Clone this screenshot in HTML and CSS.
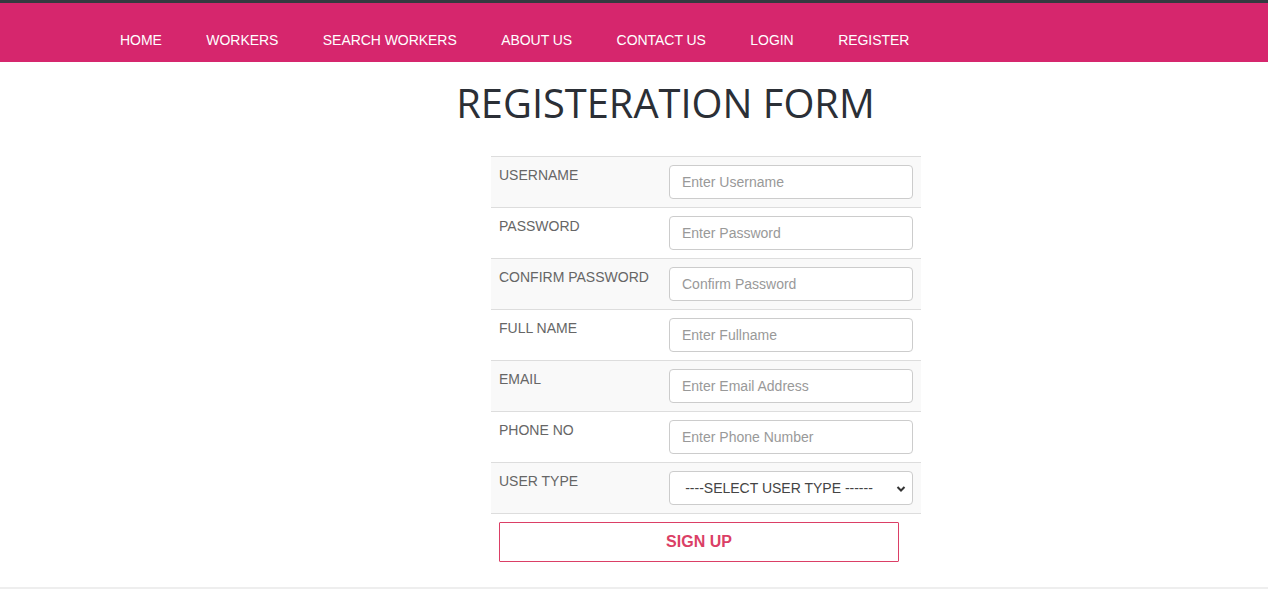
FILE: index.html
```html
<!DOCTYPE html>
<html>
<head>
<meta charset="utf-8">
<link rel="stylesheet" href="styles.css">
</head>
<body>
<div class="topline"></div>
<nav class="nav">
  <a href="#">HOME</a>
  <a href="#">WORKERS</a>
  <a href="#">SEARCH WORKERS</a>
  <a href="#">ABOUT US</a>
  <a href="#">CONTACT US</a>
  <a href="#">LOGIN</a>
  <a href="#">REGISTER</a>
</nav>
<main class="main">
  <h1 class="title">REGISTERATION FORM</h1>
  <form class="form">
    <table class="tbl">
      <tr><td class="lbl">USERNAME</td><td class="fld"><input class="inp" type="text" placeholder="Enter Username"></td></tr>
      <tr><td class="lbl">PASSWORD</td><td class="fld"><input class="inp" type="password" placeholder="Enter Password"></td></tr>
      <tr><td class="lbl">CONFIRM PASSWORD</td><td class="fld"><input class="inp" type="password" placeholder="Confirm Password"></td></tr>
      <tr><td class="lbl">FULL NAME</td><td class="fld"><input class="inp" type="text" placeholder="Enter Fullname"></td></tr>
      <tr><td class="lbl">EMAIL</td><td class="fld"><input class="inp" type="text" placeholder="Enter Email Address"></td></tr>
      <tr><td class="lbl">PHONE NO</td><td class="fld"><input class="inp" type="text" placeholder="Enter Phone Number"></td></tr>
      <tr><td class="lbl">USER TYPE</td><td class="fld">
        <div class="selwrap">
          <select class="sel"><option>----SELECT USER TYPE ------</option></select>
          <svg class="chev" width="10" height="8" viewBox="0 0 10 8"><path d="M1.5 2 L5 5.5 L8.5 2" fill="none" stroke="#333" stroke-width="2"/></svg>
        </div>
      </td></tr>
      <tr class="btnrow"><td colspan="2"><button type="button" class="btn">SIGN UP</button></td></tr>
    </table>
  </form>
</main>
<div class="footline"></div>
</body>
</html>
```
FILE: styles.css
```css
* { box-sizing: border-box; }
html, body { margin: 0; padding: 0; background: #fff; }
body { font-family: "Liberation Sans", Arial, sans-serif; font-size: 14px; color: #333; }
.topline { height: 3px; background: #343a40; }
.nav {
  height: 59px;
  background: #d6266d;
  display: flex;
  align-items: flex-start;
  padding-left: 120px;
  padding-top: 29px;
  gap: 44.5px;
}
.nav a {
  color: #fff;
  text-decoration: none;
  font-size: 14px;
  line-height: 16px;
  letter-spacing: -0.05px;
}
.main {
  display: flex;
  flex-direction: column;
  align-items: center;
  height: 525px;
}
.title {
  margin: 16px 0 0 0;
  padding-left: 63px;
  font-family: "Open Sans", sans-serif;
  font-weight: 400;
  font-size: 39.8px;
  line-height: 50px;
  color: #2b2f36;
}
.form { margin-top: 28px; padding-left: 144px; }
.tbl {
  width: 430px;
  border-collapse: collapse;
}
.tbl td { border-top: 1px solid #ddd; padding: 8px; vertical-align: top; }
.tbl tr:nth-child(odd):not(.btnrow) { background: #f9f9f9; }
.tbl tr:nth-child(7) { border-bottom: 1px solid #ddd; }
.lbl { width: 170px; color: #666; font-size: 14px; line-height: 20px; }
.fld { width: 260px; }
.inp, .sel {
  display: block;
  width: 244px;
  height: 34px;
  border: 1px solid #ccc;
  border-radius: 4px;
  padding: 6px 12px;
  font-family: "Liberation Sans", Arial, sans-serif;
  font-size: 14px;
  color: #555;
  background: #fff;
}
.inp::placeholder { color: #999; }
.selwrap { position: relative; width: 244px; }
.sel {
  appearance: none;
  -webkit-appearance: none;
  text-align: center;
  text-align-last: center;
  padding: 6px 28px 6px 4px;
  color: #444;
}
.chev { position: absolute; right: 7px; top: 14px; pointer-events: none; }
.btnrow td { border-top: none; padding: 8px; }
.btn {
  display: block;
  width: 400px;
  height: 40px;
  background: #fff;
  border: 1px solid #db3f66;
  border-radius: 1px;
  color: #db3f66;
  font-family: "Liberation Sans", Arial, sans-serif;
  font-weight: bold;
  font-size: 16px;
  cursor: pointer;
}
.footline { height: 2px; background: #eee; }
```
